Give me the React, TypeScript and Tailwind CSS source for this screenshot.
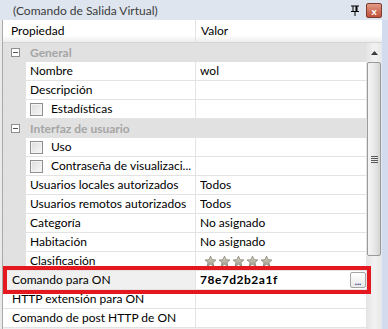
import React from "react";

type Row =
  | { kind: "cat"; label: string }
  | {
      kind: "prop";
      label: string;
      value?: string;
      checkbox?: boolean;
      flat?: boolean;
      stars?: boolean;
      bold?: boolean;
      button?: boolean;
    };

const rows: Row[] = [
  { kind: "cat", label: "General" },
  { kind: "prop", label: "Nombre", value: "wol" },
  { kind: "prop", label: "Descripción" },
  { kind: "prop", label: "Estadísticas", checkbox: true },
  { kind: "cat", label: "Interfaz de usuario" },
  { kind: "prop", label: "Uso", checkbox: true },
  { kind: "prop", label: "Contraseña de visualizaci...", checkbox: true },
  { kind: "prop", label: "Usuarios locales autorizados", value: "Todos" },
  { kind: "prop", label: "Usuarios remotos autorizados", value: "Todos" },
  { kind: "prop", label: "Categoría", value: "No asignado" },
  { kind: "prop", label: "Habitación", value: "No asignado" },
  { kind: "prop", label: "Clasificación", stars: true },
  { kind: "prop", label: "Comando para ON", value: "78e7d2b2a1f", flat: true, bold: true, button: true },
  { kind: "prop", label: "HTTP extensión para ON", flat: true },
  { kind: "prop", label: "Comando de post HTTP de ON", flat: true },
];

function Checkbox() {
  return (
    <span className="mr-[8px] inline-block h-[13px] w-[13px] shrink-0 border border-[#8f8f8f] bg-gradient-to-br from-[#dcdcdc] to-[#f8f8f8] shadow-[inset_0_0_0_1px_#f4f4f4]" />
  );
}

function Collapse() {
  return (
    <span className="flex h-[9px] w-[9px] items-center justify-center border border-[#8e8e8e] bg-white">
      <span className="h-px w-[5px] bg-[#555]" />
    </span>
  );
}

function Star() {
  return (
    <svg width="13" height="13" viewBox="0 0 24 24">
      <defs>
        <linearGradient id="sg" x1="0" y1="0" x2="0" y2="1">
          <stop offset="0" stopColor="#d8d4ca" />
          <stop offset="1" stopColor="#9d9888" />
        </linearGradient>
      </defs>
      <path
        d="M12 2l2.9 6.6 7.1.6-5.4 4.7 1.6 7-6.2-3.7-6.2 3.7 1.6-7L2 9.2l7.1-.6z"
        fill="url(#sg)"
        stroke="#8d8878"
        strokeWidth="1.5"
        strokeLinejoin="round"
      />
    </svg>
  );
}

function PropRow({ row }: { row: Extract<Row, { kind: "prop" }> }) {
  return (
    <div className="flex h-[19px] border-b border-[#e3e3e3]">
      {!row.flat && <div className="w-[23px] shrink-0 bg-[#e1e1e1]" />}
      <div
        className={`flex shrink-0 items-center overflow-hidden border-r border-[#e3e3e3] ${
          row.flat ? "w-[193px] pl-[9px]" : "w-[170px] pl-[4px]"
        } ${row.button ? "bg-[#f0f0f0]" : "bg-white"}`}
      >
        {row.checkbox && <Checkbox />}
        <span className="whitespace-nowrap">{row.label}</span>
      </div>
      <div className="relative flex flex-1 items-center bg-white pl-[4px]">
        {row.stars ? (
          <div className="ml-[4px] flex gap-[1px]">
            <Star />
            <Star />
            <Star />
            <Star />
            <Star />
          </div>
        ) : (
          <span className={row.bold ? "font-bold tracking-[0.5px]" : ""}>{row.value}</span>
        )}
        {row.button && (
          <span className="absolute right-[0px] top-[1px] flex h-[16px] w-[16px] items-end justify-center rounded-[2px] border border-[#a6a6a6] bg-gradient-to-b from-white to-[#e8e8e8] pb-[1px] text-[9px] font-bold leading-none text-[#2a2a8a]">
            ...
          </span>
        )}
      </div>
    </div>
  );
}

export default function App() {
  return (
    <div
      className="relative flex h-[329px] w-[388px] flex-col overflow-hidden bg-[#f0f0f0] text-[12px] text-black"
      style={{ fontFamily: 'Lato, "Noto Sans", sans-serif' }}
    >
      {/* title bar */}
      <div className="flex h-[20px] shrink-0 items-center bg-[#dee5ef] pl-[13px] pr-[6px] pt-[1px] text-[#3c3c3c]">
        <span className="flex-1">(Comando de Salida Virtual)</span>
        <svg width="8" height="11" viewBox="0 0 8 11" className="mr-[7px]">
          <rect x="0" y="0.5" width="8" height="1" fill="#000" />
          <rect x="1.5" y="1" width="1" height="5" fill="#000" />
          <rect x="4.5" y="1" width="2" height="5" fill="#000" />
          <rect x="0" y="6" width="8" height="1" fill="#000" />
          <rect x="3.5" y="7" width="1" height="4" fill="#000" />
        </svg>
        <span className="flex h-[15px] w-[16px] items-center justify-center rounded-[2px] border border-[#7d3b2f] bg-gradient-to-b from-[#e29a86] to-[#c04f38] text-[10px] font-bold leading-none text-white">
          x
        </span>
      </div>

      <div className="flex flex-1">
        {/* left edge */}
        <div className="w-[3px] shrink-0 border-r border-[#a9a9a9] bg-[#eaeaea]" />

        <div className="flex flex-1 flex-col">
          {/* header */}
          <div className="flex h-[23px] shrink-0 border-b border-[#d5d5d5] bg-gradient-to-b from-white from-70% to-[#ededed]">
            <div className="flex w-[193px] items-center border-r border-[#e3e3e3] pl-[8px]">Propiedad</div>
            <div className="flex flex-1 items-center pl-[5px]">Valor</div>
          </div>

          <div className="flex flex-1">
            <div className="flex w-[363px] flex-col">
              {rows.map((row, i) =>
                row.kind === "cat" ? (
                  <div key={i} className="flex h-[19px] items-center bg-[#e1e1e1]">
                    <div className="flex w-[23px] justify-center pl-[2px]">
                      <Collapse />
                    </div>
                    <span className="pl-[4px] font-bold text-[#a5a5a5]">{row.label}</span>
                  </div>
                ) : (
                  <PropRow key={i} row={row} />
                )
              )}
            </div>

            {/* scrollbar */}
            <div className="flex w-[16px] flex-col bg-gradient-to-r from-[#e3e3e3] via-[#f2f2f2] to-[#e8e8e8]">
              <div className="flex h-[19px] items-center justify-center">
                <svg width="7" height="4" viewBox="0 0 7 4">
                  <path d="M0 4L3.5 0 7 4z" fill="#3d3d3d" />
                </svg>
              </div>
              <div className="mx-[1px] flex h-[194px] items-center justify-center rounded-[2px] border border-[#9a9a9a] bg-gradient-to-r from-[#f4f4f4] via-[#e9e9e9] to-[#d4d4d4]">
                <div className="flex flex-col gap-[1px]">
                  <span className="h-px w-[7px] bg-[#5a5a5a]" />
                  <span className="h-px w-[7px] bg-[#5a5a5a]" />
                  <span className="h-px w-[7px] bg-[#5a5a5a]" />
                  <span className="h-px w-[7px] bg-[#5a5a5a]" />
                </div>
              </div>
            </div>
          </div>
        </div>

        {/* right edge */}
        <div className="w-[6px] shrink-0 bg-[#d3dbee]" />
      </div>

      {/* highlight annotation */}
      <div className="absolute left-[3px] top-[266px] h-[28px] w-[368px] border-[4px] border-[#e5171f]" />
    </div>
  );
}
